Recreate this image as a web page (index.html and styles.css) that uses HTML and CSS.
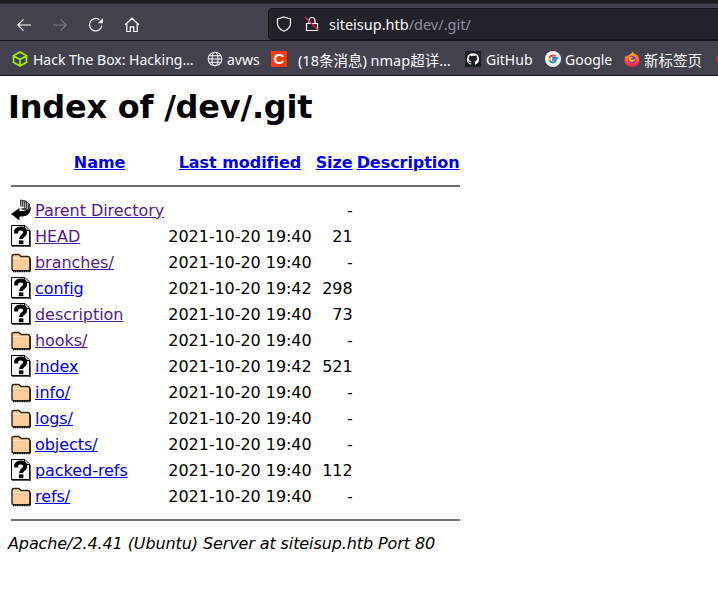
FILE: index.html
```html
<!DOCTYPE html>
<html lang="en">
<head>
<meta charset="utf-8">
<title>Index of /dev/.git</title>
<link rel="stylesheet" href="styles.css">
</head>
<body>
<svg class="defs" width="0" height="0" aria-hidden="true">
  <symbol id="i-unknown" viewBox="0 0 20 22">
    <path d="M.5.5H14L18.5 5V20.5H.5Z" fill="#fff" stroke="#000"/>
    <path d="M13.5 1V5.5H18" fill="#ccc" stroke="#000"/>
    <path d="M19 6V21H1V22H20V6Z" fill="#555"/>
    <path d="M5.2 8.4V6Q6.5 3.6 9.8 3.6Q14.2 3.6 14.2 7.2Q14.2 9.2 11.8 10.8Q10 12 10 14" fill="none" stroke="#000" stroke-width="4"/>
    <rect x="7.8" y="15.4" width="4.6" height="3.8" fill="#000"/>
  </symbol>
  <symbol id="i-folder" viewBox="0 0 20 22">
    <path d="M1 5.5Q1 3.5 3 3.5H8L10 5.5H16.5Q18.8 5.5 18.8 8V18Q18.8 19.8 17 19.8H2.8Q1 19.8 1 18Z" fill="#fc9" stroke="#2e2418" stroke-width="1.4"/>
    <path d="M2 7.5H17.5" stroke="#ffe6cc" stroke-width="1"/>
    <path d="M2 20.5H19" stroke="#000" stroke-width="1.6" stroke-dasharray="1.2 .6"/>
    <path d="M19.5 7.5V20.5" stroke="#222" stroke-width="1.2"/>
  </symbol>
  <symbol id="i-back" viewBox="0 0 20 22">
    <path d="M9 .5L15 1.5L19 5L19.5 10L15 12L9 10L14 8.5L9 7Z" fill="#444"/>
    <path d="M10.5 2V7M12.5 2.5V8M14.5 3V9M16.5 4V10" stroke="#aaa" stroke-width="1"/>
    <path d="M20 8Q19.5 17 11.5 17.5H8.5V21.5L0 15L8.5 9V12H12.5Q17.5 12 20 8Z" fill="#000"/>
  </symbol>
</svg>
<header class="chrome">
  <div class="tabstrip"></div>
  <div class="toolbar">
    <nav class="nav">
      <svg class="navicon" viewBox="0 0 16 16"><path d="M15 8H2M7.5 2.3L1.8 8L7.5 13.7" fill="none" stroke="#fbfbfe" stroke-width="1.2"/></svg>
      <svg class="navicon" viewBox="0 0 16 16"><path d="M1 8H14M8.5 2.3L14.2 8L8.5 13.7" fill="none" stroke="#7c7b84" stroke-width="1.2"/></svg>
      <svg class="navicon" viewBox="0 0 16 16"><path d="M13.8 8.6A6.2 6.2 0 1 1 11.5 2.8" fill="none" stroke="#fbfbfe" stroke-width="1.2"/><path d="M15 1V6.2H9.8Z" fill="#fbfbfe"/></svg>
      <svg class="navicon" viewBox="0 0 16 16"><path d="M1 8L8 1.2L15 8M2.8 7V14.5H6.3V9.8H9.7V14.5H13.2V7" fill="none" stroke="#fbfbfe" stroke-width="1.2"/></svg>
    </nav>
    <div class="urlbar">
      <svg class="shield" viewBox="0 0 16 16"><path d="M8 1L14.5 3V7.5Q14.5 12.5 8 15.2Q1.5 12.5 1.5 7.5V3Z" fill="none" stroke="#fbfbfe" stroke-width="1.2"/></svg>
      <svg class="lock" viewBox="0 0 16 16"><path d="M5 7V4.5A3 3 0 0 1 11 4.5V7M2.5 7.5H13.5V14.5H2.5Z" fill="none" stroke="#fbfbfe" stroke-width="1.2"/><path d="M1 1L14.5 14.5" stroke="#e22850" stroke-width="1.3"/></svg>
      <span class="url">siteisup.htb<span class="url-path">/dev/.git/</span></span>
    </div>
  </div>
  <div class="bookmarks">
    <a class="bm bm-htb"><svg class="favicon" viewBox="0 0 16 16"><path d="M8 1L14.5 4.7V11.3L8 15L1.5 11.3V4.7ZM1.5 4.7L8 8.4L14.5 4.7M8 8.4V15" fill="none" stroke="#9fef00" stroke-width="1.7"/></svg><span>Hack The Box: Hacking…</span></a>
    <a class="bm bm-avws"><svg class="favicon" viewBox="0 0 16 16"><g fill="none" stroke="#fbfbfe" stroke-width="1.1"><circle cx="8" cy="8" r="6.8"/><ellipse cx="8" cy="8" rx="3" ry="6.8"/><path d="M1.2 8H14.8M2.2 4.8H13.8M2.2 11.2H13.8"/></g></svg><span>avws</span></a>
    <a class="bm bm-csdn"><span class="csdn">C</span><span class="cjk">(18条消息) nmap超详…</span></a>
    <a class="bm bm-gh"><svg class="favicon" viewBox="0 0 16 16"><rect width="16" height="16" fill="#1b1f23"/><path d="M8 2.2A5.9 5.9 0 0 0 6.1 13.7V12.2C4.4 12.6 4 11.4 4 11.4C3.7 10.7 3.3 10.5 3.3 10.5C2.8 10.1 3.4 10.2 3.4 10.2C4 10.2 4.3 10.8 4.3 10.8C4.8 11.7 5.7 11.4 6.1 11.3C6.1 10.9 6.3 10.6 6.5 10.5C5.1 10.3 3.8 9.8 3.8 7.6C3.8 7 4 6.4 4.4 6C4.3 5.9 4.2 5.2 4.5 4.4C4.5 4.4 5 4.2 6.1 5A5.6 5.6 0 0 1 9.9 5C11 4.2 11.5 4.4 11.5 4.4C11.8 5.2 11.7 5.9 11.6 6C12 6.4 12.2 7 12.2 7.6C12.2 9.8 10.9 10.3 9.5 10.5C9.8 10.7 10 11.1 10 11.7V13.7A5.9 5.9 0 0 0 8 2.2Z" fill="#fff"/></svg><span>GitHub</span></a>
    <a class="bm bm-g"><svg class="favicon" viewBox="0 0 16 16"><circle cx="8" cy="8" r="8" fill="#fff"/><path d="M13.2 7.1H8V9.1H11C10.6 10.6 9.4 11.5 8 11.5" fill="none" stroke="#4285f4" stroke-width="2"/><path d="M8 11.5C6.4 11.5 5.1 10.6 4.6 9.2" fill="none" stroke="#34a853" stroke-width="2"/><path d="M4.7 9.6A3.6 3.6 0 0 1 4.7 6.4" fill="none" stroke="#fbbc05" stroke-width="2"/><path d="M4.6 6.9C5.1 5.4 6.4 4.5 8 4.5C9 4.5 9.8 4.8 10.5 5.4" fill="none" stroke="#ea4335" stroke-width="2"/></svg><span>Google</span></a>
    <a class="bm bm-ff"><svg class="favicon" viewBox="0 0 16 16"><defs><linearGradient id="fx" x1="0" y1="0" x2="0" y2="1"><stop offset="0" stop-color="#ffb51f"/><stop offset=".55" stop-color="#ff5a2c"/><stop offset="1" stop-color="#f5156c"/></linearGradient></defs><path d="M8.5 .5C9 2 11 3 12.5 4L13 3.5C15 6 16 9 15 11.5C14 14.5 11 16 8 16C4 16 .5 13 .5 9C.5 7 1 5.5 2 4.5C2.5 5 3 5.2 3.2 5.2C4.5 3.5 7.5 3.5 8.5 .5Z" fill="url(#fx)"/><circle cx="8" cy="8.6" r="3.6" fill="#7a3bc8"/><path d="M5 6H9C8.5 7 7 7 6.5 7.5C7 9 9.5 9 11 8C11 10 9 11.5 7 11C5 10 4.5 8 5 6Z" fill="#ffb51f"/></svg><span class="cjk">新标签页</span></a>
    <span class="bm-more"></span>
  </div>
</header>
<main class="listing">
  <h1 class="title">Index of /dev/.git</h1>
  <table class="files">
    <tr>
      <th class="c-icon"></th>
      <th><a href="#n">Name</a></th>
      <th><a href="#m">Last modified</a></th>
      <th><a href="#s">Size</a></th>
      <th><a href="#d">Description</a></th>
    </tr>
    <tr><th colspan="5"><hr class="rule rule-top"></th></tr>
    <tr><td class="c-icon"><svg class="fileicon"><use href="#i-back"/></svg></td><td><a class="seen" href="#p">Parent Directory</a></td><td></td><td class="size">-</td><td></td></tr>
    <tr><td class="c-icon"><svg class="fileicon"><use href="#i-unknown"/></svg></td><td><a class="seen" href="#a">HEAD</a></td><td class="date">2021-10-20 19:40</td><td class="size">21</td><td></td></tr>
    <tr><td class="c-icon"><svg class="fileicon"><use href="#i-folder"/></svg></td><td><a class="seen" href="#b">branches/</a></td><td class="date">2021-10-20 19:40</td><td class="size">-</td><td></td></tr>
    <tr><td class="c-icon"><svg class="fileicon"><use href="#i-unknown"/></svg></td><td><a href="#c">config</a></td><td class="date">2021-10-20 19:42</td><td class="size">298</td><td></td></tr>
    <tr><td class="c-icon"><svg class="fileicon"><use href="#i-unknown"/></svg></td><td><a class="seen" href="#e">description</a></td><td class="date">2021-10-20 19:40</td><td class="size">73</td><td></td></tr>
    <tr><td class="c-icon"><svg class="fileicon"><use href="#i-folder"/></svg></td><td><a class="seen" href="#f">hooks/</a></td><td class="date">2021-10-20 19:40</td><td class="size">-</td><td></td></tr>
    <tr><td class="c-icon"><svg class="fileicon"><use href="#i-unknown"/></svg></td><td><a href="#g">index</a></td><td class="date">2021-10-20 19:42</td><td class="size">521</td><td></td></tr>
    <tr><td class="c-icon"><svg class="fileicon"><use href="#i-folder"/></svg></td><td><a href="#h">info/</a></td><td class="date">2021-10-20 19:40</td><td class="size">-</td><td></td></tr>
    <tr><td class="c-icon"><svg class="fileicon"><use href="#i-folder"/></svg></td><td><a href="#i">logs/</a></td><td class="date">2021-10-20 19:40</td><td class="size">-</td><td></td></tr>
    <tr><td class="c-icon"><svg class="fileicon"><use href="#i-folder"/></svg></td><td><a href="#j">objects/</a></td><td class="date">2021-10-20 19:40</td><td class="size">-</td><td></td></tr>
    <tr><td class="c-icon"><svg class="fileicon"><use href="#i-unknown"/></svg></td><td><a href="#k">packed-refs</a></td><td class="date">2021-10-20 19:40</td><td class="size">112</td><td></td></tr>
    <tr><td class="c-icon"><svg class="fileicon"><use href="#i-folder"/></svg></td><td><a href="#l">refs/</a></td><td class="date">2021-10-20 19:40</td><td class="size">-</td><td></td></tr>
    <tr><th colspan="5"><hr class="rule rule-bottom"></th></tr>
  </table>
  <address class="server">Apache/2.4.41 (Ubuntu) Server at siteisup.htb Port 80</address>
</main>
</body>
</html>
```
FILE: styles.css
```css
html, body {
  margin: 0;
  padding: 0;
  background: #fff;
  overflow: hidden;
}
body {
  width: 718px;
  height: 606px;
  font-family: "DejaVu Sans", sans-serif;
  font-size: 16px;
  color: #000;
}
.defs {
  display: block;
  height: 0;
}
.chrome {
  height: 76px;
  background: #42414d;
  font-family: "Noto Sans", "Noto Sans CJK SC", sans-serif;
  color: #fbfbfe;
  display: flex;
  flex-direction: column;
  overflow: hidden;
}
.tabstrip {
  height: 3px;
  background: #1c1b22;
  border-bottom: 1px solid #2b2a33;
}
.toolbar {
  height: 37px;
  display: flex;
  align-items: flex-start;
  border-bottom: 1px solid #17161c;
  box-sizing: border-box;
}
.nav {
  display: flex;
  align-items: center;
  width: 268px;
  height: 34px;
  padding: 8px 0 0 16px;
  gap: 20px;
  box-sizing: border-box;
}
.navicon {
  width: 16px;
  height: 16px;
  flex: none;
}
.urlbar {
  flex: 1;
  margin-top: 4px;
  margin-right: -8px;
  height: 32px;
  box-sizing: border-box;
  background: #23222b;
  border: 1px solid #15141a;
  border-radius: 4px;
  display: flex;
  align-items: center;
  padding-left: 7px;
  font-size: 14.5px;
}
.shield {
  width: 16px;
  height: 16px;
  margin-right: 12px;
}
.lock {
  width: 16px;
  height: 16px;
  margin-right: 9px;
}
.url-path {
  color: #8f8f9d;
}
.bookmarks {
  height: 35px;
  display: flex;
  align-items: center;
  font-size: 14px;
  white-space: nowrap;
  padding-top: 2px;
  box-sizing: border-box;
  border-bottom: 1px solid #17161c;
}
.bm {
  display: flex;
  align-items: center;
  flex: none;
}
.cjk {
  font-size: 14.5px;
}
.favicon {
  width: 16px;
  height: 16px;
  flex: none;
  margin-right: 4px;
}
.bm-htb {
  margin-left: 12px;
  width: 195px;
}
.bm-htb .favicon {
  margin-right: 5px;
}
.bm-avws {
  width: 64px;
}
.bm-csdn {
  width: 194px;
}
.bm-gh {
  width: 80px;
}
.bm-gh .favicon {
  margin-right: 5px;
}
.bm-g {
  width: 79px;
}
.csdn {
  width: 16px;
  height: 16px;
  background: #fc3a00;
  color: #fff;
  font-family: "Liberation Sans", sans-serif;
  font-weight: 700;
  font-size: 15px;
  line-height: 16px;
  text-align: center;
  margin-right: 11px;
}
.bm-more {
  flex: none;
  width: 6px;
  height: 6px;
  margin-left: 14px;
  border-radius: 50%;
  background: #d8232a;
}
.listing {
  padding: 0 8px;
}
.title {
  font-size: 32px;
  font-weight: 700;
  line-height: 37px;
  letter-spacing: -0.22px;
  margin: 13px 0 22px;
}
.files {
  border-collapse: separate;
  border-spacing: 2px;
  letter-spacing: -0.05px;
}
.files th, .files td {
  padding: 1px;
}
.files th {
  font-weight: 700;
  text-align: center;
}
.files a {
  color: #00e;
  text-decoration: underline;
}
.files a.seen {
  color: #551a8b;
}
.c-icon {
  height: 22px;
  width: 20px;
  vertical-align: top;
}
.fileicon {
  display: block;
  width: 20px;
  height: 22px;
}
.date {
  text-align: left;
}
.files td.size {
  text-align: right;
}
.rule {
  margin: 8px 0;
  height: 0;
  border: 0;
  border-top: 2px solid #6f6f6f;
}
.server {
  font-style: italic;
  letter-spacing: -0.1px;
  margin-top: 2px;
}
```
